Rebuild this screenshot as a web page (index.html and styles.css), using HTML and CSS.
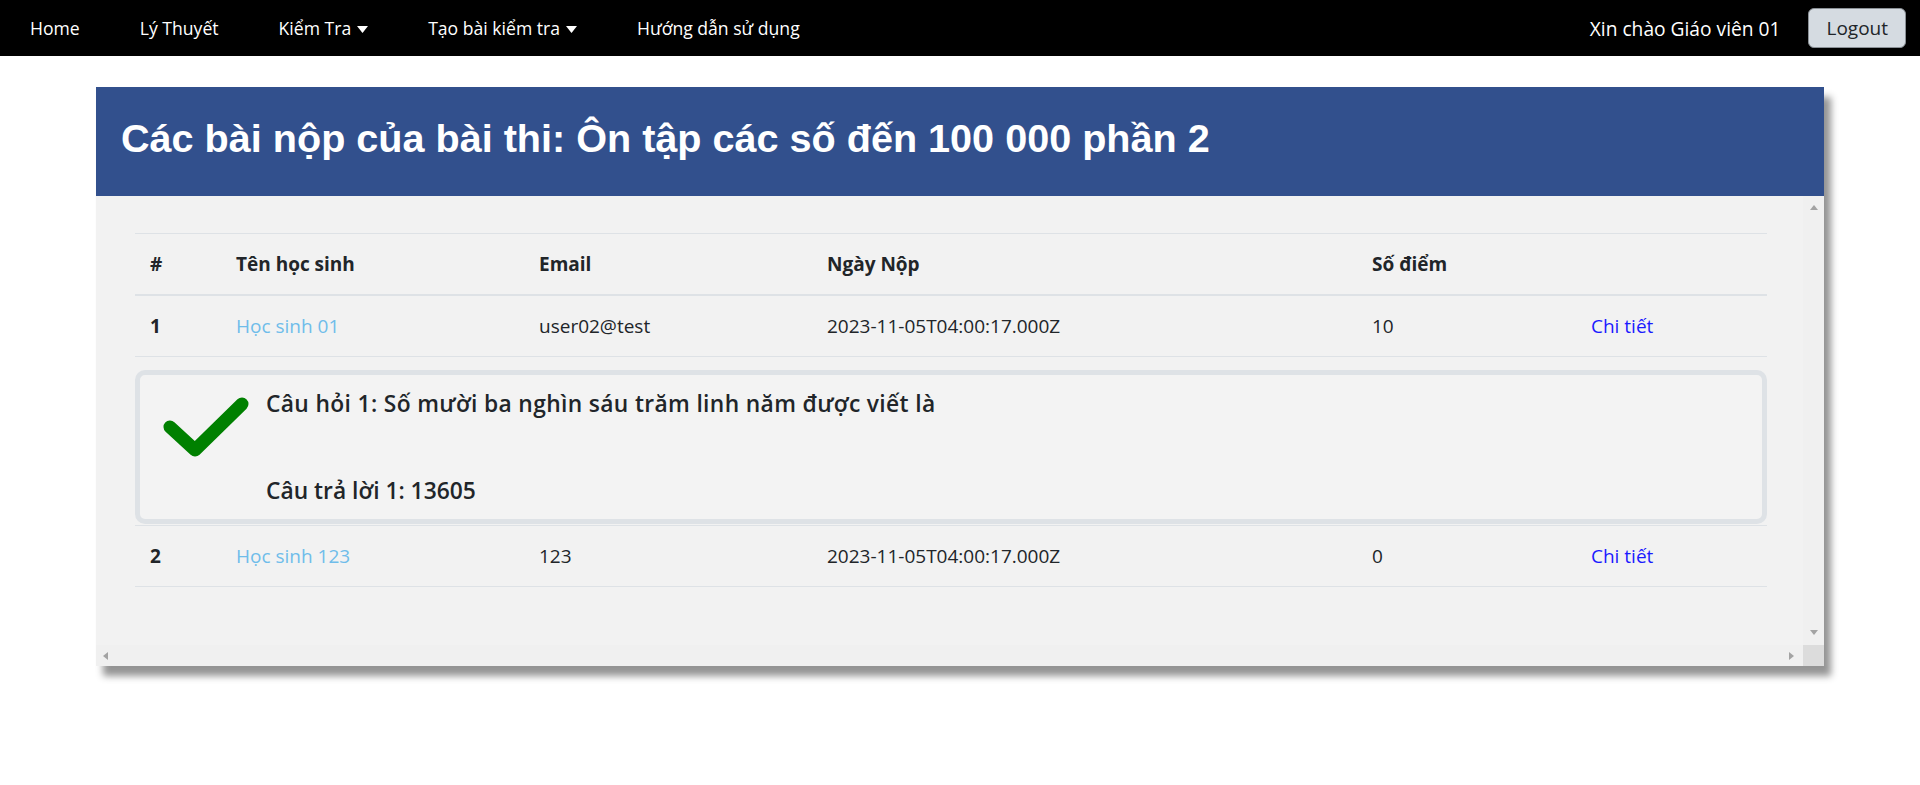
FILE: index.html
```html
<!DOCTYPE html>
<html lang="vi">
<head>
<meta charset="utf-8">
<title>Các bài nộp</title>
<link rel="stylesheet" href="styles.css">
</head>
<body>
<nav class="topbar">
  <ul class="nav-left">
    <li><a class="nav-link">Home</a></li>
    <li><a class="nav-link">Lý Thuyết</a></li>
    <li><a class="nav-link">Kiểm Tra<svg class="caret" viewBox="0 0 11 7" width="11" height="7"><path d="M0 0 H11 L5.5 7 Z" fill="#fff"/></svg></a></li>
    <li><a class="nav-link">Tạo bài kiểm tra<svg class="caret" viewBox="0 0 11 7" width="11" height="7"><path d="M0 0 H11 L5.5 7 Z" fill="#fff"/></svg></a></li>
    <li><a class="nav-link">Hướng dẫn sử dụng</a></li>
  </ul>
  <div class="nav-right">
    <span class="greeting">Xin chào Giáo viên 01</span>
    <button class="btn-logout">Logout</button>
  </div>
</nav>

<div class="page">
  <main class="card">
    <header class="card-header">
      <h1 class="card-title">Các bài nộp của bài thi: Ôn tập các số đến 100 000 phần 2</h1>
    </header>
    <div class="card-body">
      <div class="scroll-content">
        <table class="sub-table">
          <colgroup>
            <col class="c-idx"><col class="c-name"><col class="c-email"><col class="c-date"><col class="c-score"><col class="c-act">
          </colgroup>
          <thead>
            <tr><th>#</th><th>Tên học sinh</th><th>Email</th><th>Ngày Nộp</th><th>Số điểm</th><th></th></tr>
          </thead>
          <tbody>
            <tr>
              <th>1</th>
              <td><a class="student">Học sinh 01</a></td>
              <td>user02@test</td>
              <td>2023-11-05T04:00:17.000Z</td>
              <td>10</td>
              <td><a class="detail">Chi tiết</a></td>
            </tr>
            <tr class="detail-row">
              <td colspan="6">
                <div class="answer-box">
                  <svg class="check" viewBox="0 0 90 70" width="90" height="70"><path d="M10 35 L35 58 L82 12" fill="none" stroke="#008000" stroke-width="13" stroke-linecap="round" stroke-linejoin="round"/></svg>
                  <div class="answer-text">
                    <p class="question">Câu hỏi 1: Số mười ba nghìn sáu trăm linh năm được viết là</p>
                    <p class="answer">Câu trả lời 1: 13605</p>
                  </div>
                </div>
              </td>
            </tr>
            <tr>
              <th>2</th>
              <td><a class="student">Học sinh 123</a></td>
              <td>123</td>
              <td>2023-11-05T04:00:17.000Z</td>
              <td>0</td>
              <td><a class="detail">Chi tiết</a></td>
            </tr>
          </tbody>
        </table>
      </div>
      <div class="vbar"><span class="arrow arrow-up"></span><span class="arrow arrow-down"></span></div>
      <div class="hbar"><span class="arrow arrow-left"></span><span class="arrow arrow-right"></span></div>
      <div class="corner"></div>
    </div>
  </main>
</div>
</body>
</html>
```

FILE: styles.css
```css
* { box-sizing: border-box; }

html, body {
  margin: 0;
  padding: 0;
  background: #ffffff;
}

body {
  font-family: "Segoe UI", "Open Sans", "Noto Sans", sans-serif;
  color: #212529;
  font-size: 18px;
}

/* ---------- top bar ---------- */
.topbar {
  height: 56px;
  background: #000000;
  display: flex;
  align-items: center;
  justify-content: space-between;
}

.nav-left {
  list-style: none;
  margin: 0;
  padding: 0;
  display: flex;
  align-items: center;
}

.nav-link {
  display: flex;
  align-items: center;
  padding: 0 30px;
  color: #ffffff;
  font-size: 17.6px;
  line-height: 28px;
  text-decoration: none;
  white-space: nowrap;
}

.caret {
  margin-left: 6px;
  margin-top: 2px;
}

.nav-right {
  display: flex;
  align-items: center;
  padding-right: 14px;
}

.greeting {
  color: #ffffff;
  font-size: 19.2px;
  white-space: nowrap;
}

.btn-logout {
  margin-left: 28px;
  height: 40px;
  padding: 0 17px;
  font-family: inherit;
  font-size: 19px;
  color: #212529;
  background: #d5dbe1;
  border: 1px solid #8a9096;
  border-radius: 6px;
}

/* ---------- card ---------- */
.page {
  padding: 31px 0 40px;
}

.card {
  display: block;
  width: 90%;
  margin: 0 auto;
  box-shadow: 7px 10px 7px rgba(0, 0, 0, 0.42);
}

.card-header {
  background: #32508d;
  padding: 28px 25px 35px;
}

.card-title {
  margin: 0;
  font-family: "Liberation Sans", Arial, sans-serif;
  font-weight: bold;
  font-size: 39.6px;
  line-height: 46px;
  color: #ffffff;
  white-space: nowrap;
}

.card-body {
  height: 470px;
  background: #f2f2f2;
  display: grid;
  grid-template-columns: 1fr 21px;
  grid-template-rows: 1fr 21px;
}

.scroll-content {
  overflow: hidden;
  min-width: 0;
  min-height: 0;
}

/* scrollbar tracks */
.vbar {
  background: #f0f0f0;
  display: flex;
  flex-direction: column;
  justify-content: space-between;
  align-items: center;
  padding: 9px 0 10px;
}

.hbar {
  background: #f0f0f0;
  display: flex;
  justify-content: space-between;
  align-items: center;
  padding: 0 9px 0 7px;
}

.corner {
  background: #dcdcdc;
}

.arrow {
  width: 0;
  height: 0;
  border-style: solid;
  border-color: transparent;
}

.arrow-up {
  border-width: 0 4.5px 5px;
  border-bottom-color: #a3a3a3;
}

.arrow-down {
  border-width: 5px 4.5px 0;
  border-top-color: #a3a3a3;
}

.arrow-left {
  border-width: 4.5px 5px 4.5px 0;
  border-right-color: #a3a3a3;
}

.arrow-right {
  border-width: 4.5px 0 4.5px 5px;
  border-left-color: #a3a3a3;
}

/* ---------- table ---------- */
.sub-table {
  width: calc(100% - 76px);
  margin: 37px 37px 0 39px;
  border-collapse: collapse;
  table-layout: fixed;
  font-size: 19px;
}

.c-idx { width: 86px; }
.c-name { width: 303px; }
.c-email { width: 288px; }
.c-date { width: 545px; }
.c-score { width: 219px; }
.c-act { width: 191px; }

.sub-table th,
.sub-table td {
  padding: 15px;
  line-height: 30px;
  text-align: left;
  vertical-align: top;
  white-space: nowrap;
}

.sub-table thead th {
  font-weight: bold;
  border-top: 1px solid #dee2e6;
  border-bottom: 2px solid #dee2e6;
}

.sub-table tbody tr {
  border-bottom: 1px solid #dee2e6;
}

.sub-table tbody th {
  font-weight: bold;
}

.student {
  color: #6fbdea;
  text-decoration: none;
}

.detail {
  color: #1a1aff;
  text-decoration: none;
}

.detail-row td {
  padding: 13px 0 1px;
}

.answer-box {
  display: flex;
  align-items: flex-start;
  height: 154px;
  border: 5px solid #dee2e6;
  border-radius: 10px;
  background: #f3f3f3;
}

.check {
  flex: none;
  margin: 17px 0 0 20px;
}

.answer-text {
  margin-left: 16px;
  padding-top: 14px;
}

.question,
.answer {
  margin: 0;
  font-size: 22.8px;
  font-weight: 600;
  line-height: 30px;
  white-space: nowrap;
}

.question {
  letter-spacing: 0.35px;
  margin-bottom: 57px;
}
```
